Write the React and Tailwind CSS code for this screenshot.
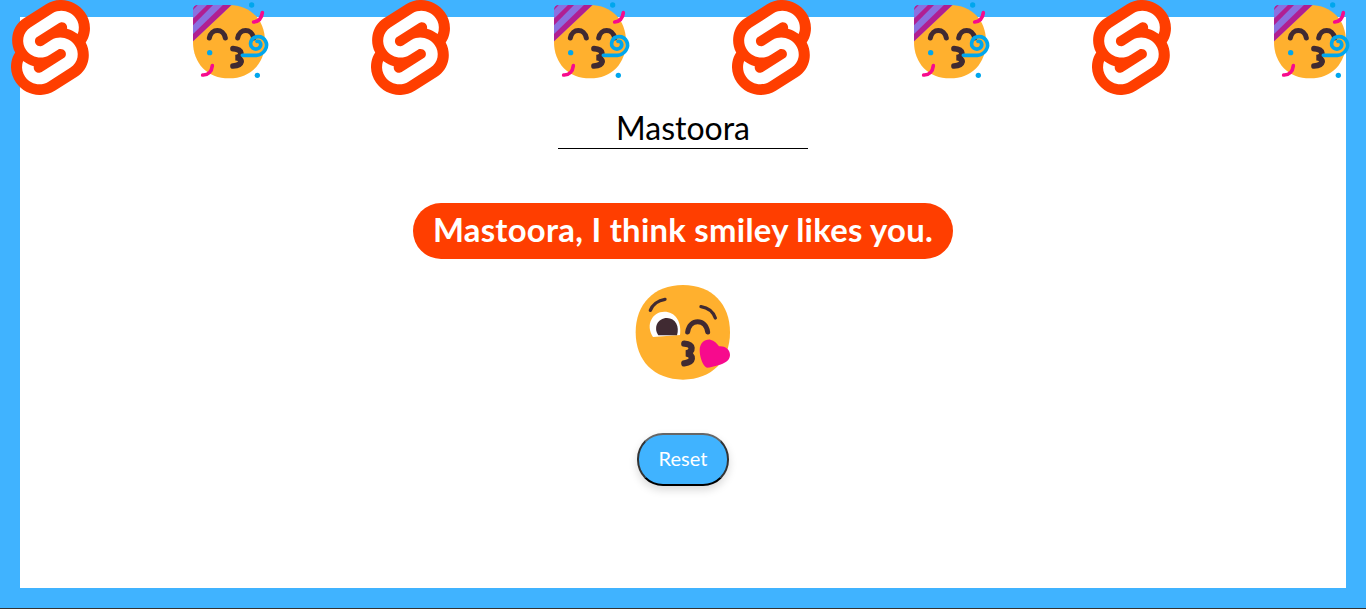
import React from 'react';

const font = { fontFamily: 'Lato' };

function SvelteLogo() {
  return (
    <svg viewBox="0 0 98.1 118" className="block w-[79px] h-[95px]">
      <path fill="#ff3e00" d="M91.8 15.6C80.9-.1 59.2-4.7 43.6 5.2L16.1 22.8C8.6 27.5 3.4 35.2 1.9 43.9c-1.3 7.3-.2 14.8 3.3 21.3-2.4 3.6-4 7.6-4.7 11.8-1.6 8.9.5 18.1 5.7 25.4 11 15.7 32.6 20.3 48.2 10.4l27.5-17.5c7.5-4.7 12.7-12.4 14.2-21.1 1.3-7.3.2-14.8-3.3-21.3 2.4-3.6 4-7.6 4.7-11.8 1.7-9-.4-18.2-5.7-25.5" />
      <path fill="#fff" d="M40.9 103.9c-8.9 2.3-18.2-1.2-23.4-8.7-3.2-4.4-4.4-9.9-3.5-15.3.2-.9.4-1.7.6-2.6l.5-1.6 1.4 1c3.3 2.4 6.9 4.2 10.8 5.4l1 .3-.1 1c-.1 1.4.3 2.9 1.1 4.1 1.6 2.3 4.4 3.4 7.1 2.7.6-.2 1.2-.4 1.7-.7L65.5 72c1.4-.9 2.3-2.2 2.6-3.8.3-1.6-.1-3.3-1-4.6-1.6-2.3-4.4-3.3-7.1-2.6-.6.2-1.2.4-1.7.7l-10.5 6.7c-1.7 1.1-3.6 1.9-5.6 2.4-8.9 2.3-18.2-1.2-23.4-8.7-3.1-4.4-4.4-9.9-3.4-15.3.9-5.2 4.1-9.9 8.6-12.7l27.5-17.5c1.7-1.1 3.6-1.9 5.6-2.5 8.9-2.3 18.2 1.2 23.4 8.7 3.2 4.4 4.4 9.9 3.5 15.3-.2.9-.4 1.7-.7 2.6l-.5 1.6-1.4-1c-3.3-2.4-6.9-4.2-10.8-5.4l-1-.3.1-1c.1-1.4-.3-2.9-1.1-4.1-1.6-2.3-4.4-3.3-7.1-2.6-.6.2-1.2.4-1.7.7L32.4 46.1c-1.4.9-2.3 2.2-2.6 3.8s.1 3.3 1 4.6c1.6 2.3 4.4 3.3 7.1 2.6.6-.2 1.2-.4 1.7-.7l10.5-6.7c1.7-1.1 3.6-1.9 5.6-2.5 8.9-2.3 18.2 1.2 23.4 8.7 3.2 4.4 4.4 9.9 3.5 15.3-.9 5.2-4.1 9.9-8.6 12.7l-27.5 17.5c-1.7 1.1-3.6 1.9-5.6 2.5" />
    </svg>
  );
}

// coords follow a 3x crop of the emoji
function PartyFace({ id }) {
  return (
    <svg viewBox="0 0 300 270" className="block w-[100px] h-[90px] -ml-px">
      <defs>
        <clipPath id={id}>
          <path d="M150 235C215 235 258 190 258 125C258 60 215 15 150 15L58 15Q42 15 42 31L42 125C42 190 85 235 150 235Z" />
        </clipPath>
      </defs>
      <path fill="#ffb02e" d="M150 235C215 235 258 190 258 125C258 60 215 15 150 15C85 15 42 60 42 125C42 190 85 235 150 235Z" />
      <g clipPath={`url(#${id})`}>
        <path fill="#8a70e0" d="M30 5H168L30 135Z" />
        <path fill="#b01f92" d="M168 5H142L30 114V135Z" />
        <path fill="#b01f92" d="M112 5H94L30 68V88Z" />
        <path fill="#b01f92" d="M66 5H48L30 23V42Z" />
      </g>
      <g fill="none" stroke="#402a32" strokeWidth="15" strokeLinecap="round">
        <path d="M91 114C97 84 133 84 139 114" />
        <path d="M176 114C182 84 218 84 224 114" />
      </g>
      <path fill="none" stroke="#402a32" strokeWidth="17" strokeLinecap="round" d="M162 146C192 148 192 170 170 173C194 176 192 196 162 198" />
      <path fill="none" stroke="#00a6ed" strokeWidth="11" strokeLinecap="round" d="M190 166H232C256 164 268 140 260 124C250 104 222 106 216 124C210 142 228 152 240 144C250 136 244 122 234 124" />
      <g fill="#00a6ed">
        <circle cx="218" cy="15" r="8" />
        <circle cx="92" cy="158" r="8" />
        <circle cx="235" cy="226" r="8" />
      </g>
      <g fill="none" stroke="#f70a8d" strokeWidth="11" strokeLinecap="round">
        <path d="M224 66C240 64 248 54 250 38" />
        <path d="M71 225C88 226 98 214 100 197" />
      </g>
    </svg>
  );
}

// same idea, crop coords
function KissFace() {
  return (
    <svg viewBox="0 0 348 345" className="block w-[116px] h-[115px]">
      <path fill="#ffb02e" d="M174 314C262 314 315 256 315 172C315 88 262 30 174 30C86 30 32 88 32 172C32 256 86 314 174 314Z" />
      <path fill="#fff" d="M84 186C60 150 82 110 118 110C150 110 170 138 165 180Z" />
      <path fill="#402a32" d="M100 181C84 158 98 129 126 129C152 129 164 155 156 181Z" />
      <g fill="none" stroke="#402a32" strokeWidth="10" strokeLinecap="round">
        <path d="M76 106C82 90 98 76 120 73" />
        <path d="M228 95C248 98 264 110 271 129" />
      </g>
      <path fill="none" stroke="#402a32" strokeWidth="15" strokeLinecap="round" d="M188 171C194 130 242 130 248 171" />
      <path fill="none" stroke="#402a32" strokeWidth="19" strokeLinecap="round" d="M178 206C206 208 206 230 184 235C208 240 206 262 178 265" />
      <path fill="#f70a8d" d="M224 226C224 204 240 192 256 194C268 196 276 205 282 214C298 212 315 222 315 240C315 258 296 266 282 270C268 274 256 278 246 278C236 276 224 250 224 226Z" />
    </svg>
  );
}

export default function App() {
  const icons = [0, 1, 2, 3];

  return (
    <div className="relative h-[609px] overflow-hidden bg-[#40b3ff] pt-[17px] px-[20px] pb-[20px] border-b border-[#333]" style={font}>
      <div className="absolute top-0 left-0 flex">
        {icons.map((i) => (
          <React.Fragment key={i}>
            <div className="w-[180.2px] shrink-0 pl-[11px]"><SvelteLogo /></div>
            <div className="w-[180.2px] shrink-0"><PartyFace id={`hat${i}`} /></div>
          </React.Fragment>
        ))}
      </div>

      <div className="h-full bg-white flex flex-col items-center pt-[91px]">
        <input
          readOnly
          value="Mastoora"
          className="w-[250px] h-[41px] border-b border-black text-center text-[32px] text-black outline-none"
        />
        <div className="mt-[54px] w-[540px] h-[56px] pb-[3px] rounded-[28px] bg-[#ff3e00] text-white text-[32.8px] tracking-[0.28px] font-bold flex items-center justify-center">
          Mastoora, I think smiley likes you.
        </div>
        <div className="mt-[16px]"><KissFace /></div>
        <button className="mt-[43px] w-[92px] h-[53px] pb-[4px] rounded-[26px] bg-[#40b3ff] text-white text-[20px] border-2 border-t-[#666] border-x-[#333] border-b-black shadow-[0_4px_8px_rgba(0,0,0,0.15)]">
          Reset
        </button>
      </div>
    </div>
  );
}
